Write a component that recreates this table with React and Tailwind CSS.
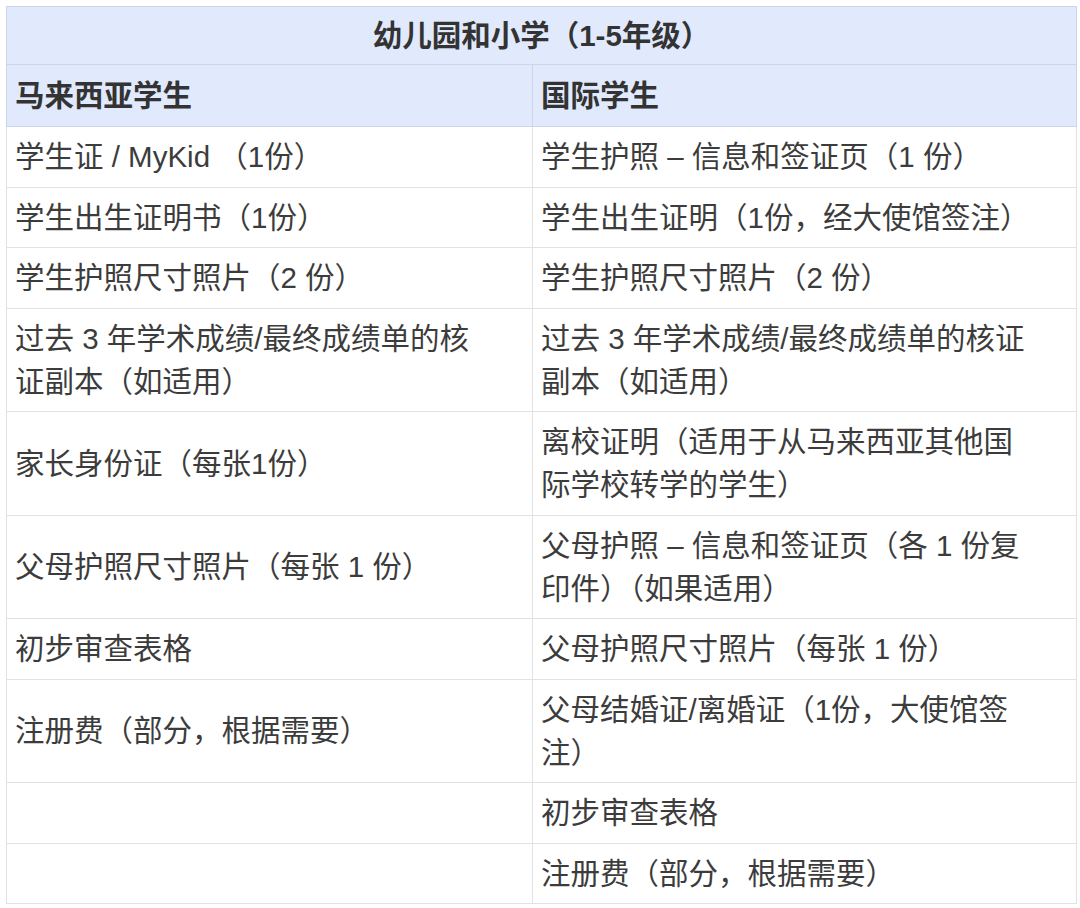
const rows = [
  [["学生证 / MyKid （1份）"], ["学生护照 – 信息和签证页（1 份）"]],
  [["学生出生证明书（1份）"], ["学生出生证明（1份，经大使馆签注）"]],
  [["学生护照尺寸照片（2 份）"], ["学生护照尺寸照片（2 份）"]],
  [
    ["过去 3 年学术成绩/最终成绩单的核", "证副本（如适用）"],
    ["过去 3 年学术成绩/最终成绩单的核证", "副本（如适用）"],
  ],
  [["家长身份证（每张1份）"], ["离校证明（适用于从马来西亚其他国", "际学校转学的学生）"]],
  [["父母护照尺寸照片（每张 1 份）"], ["父母护照 – 信息和签证页（各 1 份复", "印件）（如果适用）"]],
  [["初步审查表格"], ["父母护照尺寸照片（每张 1 份）"]],
  [["注册费（部分，根据需要）"], ["父母结婚证/离婚证（1份，大使馆签", "注）"]],
  [[], ["初步审查表格"]],
  [[], ["注册费（部分，根据需要）"]],
];

function Cell({ lines }) {
  return (
    <td className="border border-[#e2e2e2] px-[8px] py-[8.25px] align-middle">
      {lines.map((l, i) => (
        <div key={i} className="whitespace-nowrap">
          {l}
        </div>
      ))}
      {lines.length === 0 && <div>&nbsp;</div>}
    </td>
  );
}

export default function App() {
  return (
    <div
      className="min-h-[908px] w-[1080px] bg-white pl-[6px] pt-[6px]"
      style={{ fontFamily: '"Liberation Sans", "Noto Sans CJK SC", sans-serif' }}
    >
      <table className="w-[1071px] table-fixed border-collapse border border-[#d4d4d4] text-[29.5px] leading-[43px] text-[#3c3c3c]">
        <colgroup>
          <col className="w-[526px]" />
          <col />
        </colgroup>
        <thead>
          <tr className="bg-[#e1e9fd]">
            <th
              colSpan={2}
              className="border border-[#ccd5ea] px-[8px] py-[7px] text-center font-semibold text-[#333]"
            >
              幼儿园和小学（1-5年级）
            </th>
          </tr>
          <tr className="bg-[#e1e9fd]">
            <th className="border border-[#ccd5ea] px-[8px] py-[9px] text-left font-semibold text-[#333]">
              马来西亚学生
            </th>
            <th className="border border-[#ccd5ea] px-[8px] py-[9px] text-left font-semibold text-[#333]">
              国际学生
            </th>
          </tr>
        </thead>
        <tbody>
          {rows.map((r, i) => (
            <tr key={i}>
              <Cell lines={r[0]} />
              <Cell lines={r[1]} />
            </tr>
          ))}
        </tbody>
      </table>
    </div>
  );
}
